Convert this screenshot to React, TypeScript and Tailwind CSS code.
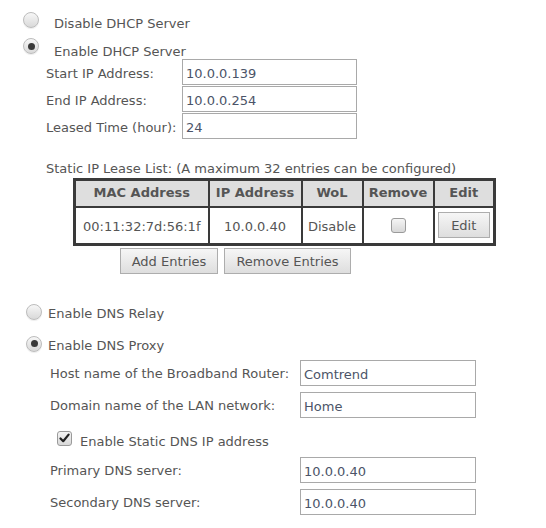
import React from "react";

function Radio({ checked }: { checked?: boolean }) {
  return (
    <span className="flex h-[16px] w-[16px] shrink-0 items-center justify-center rounded-full border border-[#bcbcbc] bg-linear-to-b from-[#f7f7f7] to-[#d9d9d9] shadow-[0_1px_1px_rgba(0,0,0,0.08)]">
      {checked && <span className="h-[7px] w-[7px] rounded-full bg-[#3a3a3a]" />}
    </span>
  );
}

function Field({ value, className = "" }: { value: string; className?: string }) {
  return (
    <div className={`flex h-[26px] items-center border border-[#a9a9a9] bg-white pl-[3px] pt-[3px] text-[#4b5468] ${className}`}>
      {value}
    </div>
  );
}

function Btn({ label, className = "" }: { label: string; className?: string }) {
  return (
    <div className={`flex h-[26px] items-center justify-center border border-[#adadad] bg-linear-to-b from-[#f6f6f6] to-[#dedede] pt-[2px] text-[#555] ${className}`}>
      {label}
    </div>
  );
}

export default function App() {
  const dhcpRows = [
    ["Start IP Address:", "10.0.0.139"],
    ["End IP Address:", "10.0.0.254"],
    ["Leased Time (hour):", "24"],
  ];

  return (
    <div className="h-[528px] w-[546px] bg-white text-[13px] leading-[18px] text-[#555]" style={{ fontFamily: '"DejaVu Sans", Verdana, sans-serif' }}>
      {/* DHCP */}
      <div className="pt-[12px]">
        <div className="flex h-[20px] items-center pl-[23px]">
          <span className="-mt-[5px]"><Radio /></span>
          <span className="ml-[15px] pt-[4px]">Disable DHCP Server</span>
        </div>
        <div className="mt-[8px] flex h-[19px] items-center pl-[23px]">
          <span className="-mt-[7px]"><Radio checked /></span>
          <span className="ml-[15px] pt-[4px]">Enable DHCP Server</span>
        </div>

        <div className="pl-[46px]">
          {dhcpRows.map(([label, value]) => (
            <div key={label} className="flex h-[27px] items-start">
              <span className="flex h-[26px] w-[136px] items-center whitespace-nowrap pt-[3px]">{label}</span>
              <Field value={value} className="w-[175px]" />
            </div>
          ))}
        </div>

        <div className="mt-[18px] whitespace-nowrap pl-[46px] pt-[2px]">Static IP Lease List: (A maximum 32 entries can be configured)</div>

        <table className="ml-[73px] w-[420px] table-fixed border-collapse border-[3px] border-[#3a3a3a]">
          <colgroup>
            <col className="w-[134px]" />
            <col className="w-[93px]" />
            <col className="w-[61px]" />
            <col className="w-[71px]" />
            <col className="w-[61px]" />
          </colgroup>
          <thead>
            <tr className="h-[27px] bg-[#dedede]">
              {["MAC Address", "IP Address", "WoL", "Remove", "Edit"].map((h) => (
                <th key={h} className="whitespace-nowrap border-2 border-[#3a3a3a] p-0 text-center font-bold text-[#555]">
                  {h}
                </th>
              ))}
            </tr>
          </thead>
          <tbody>
            <tr className="h-[38px]">
              <td className="whitespace-nowrap border-2 border-[#3a3a3a] p-0 pt-[3px] text-center">00:11:32:7d:56:1f</td>
              <td className="border-2 border-[#3a3a3a] p-0 pt-[3px] text-center">10.0.0.40</td>
              <td className="border-2 border-[#3a3a3a] p-0 pt-[3px] text-center">Disable</td>
              <td className="border-2 border-[#3a3a3a] p-0">
                <div className="flex justify-center">
                  <span className="h-[15px] w-[15px] rounded-[3px] border border-[#9a9a9a] bg-linear-to-b from-[#f5f5f5] to-[#d8d8d8]" />
                </div>
              </td>
              <td className="border-2 border-[#3a3a3a] p-0">
                <div className="flex justify-center">
                  <Btn label="Edit" className="w-[52px]" />
                </div>
              </td>
            </tr>
          </tbody>
        </table>

        <div className="mt-[2px] flex gap-[6px] pl-[120px]">
          <Btn label="Add Entries" className="w-[98px]" />
          <Btn label="Remove Entries" className="w-[127px]" />
        </div>
      </div>

      {/* DNS */}
      <div className="mt-[29px]">
        <div className="flex h-[20px] items-center pl-[26px]">
          <span className="-mt-[3px]"><Radio /></span>
          <span className="ml-[6px] pt-[2px]">Enable DNS Relay</span>
        </div>
        <div className="mt-[12px] flex h-[20px] items-center pl-[26px]">
          <span className="-mt-[3px]"><Radio checked /></span>
          <span className="ml-[6px] pt-[2px]">Enable DNS Proxy</span>
        </div>

        <div className="mt-[5px] flex flex-col gap-[6px] pl-[50px]">
          <div className="flex h-[26px] items-center">
            <span className="w-[250px] whitespace-nowrap pt-[2px]">Host name of the Broadband Router:</span>
            <Field value="Comtrend" className="w-[176px]" />
          </div>
          <div className="flex h-[26px] items-center">
            <span className="w-[250px] pt-[2px]">Domain name of the LAN network:</span>
            <Field value="Home" className="w-[176px]" />
          </div>
        </div>

        <div className="mt-[10px] flex h-[26px] items-center pl-[57px]">
          <span className="-mt-[6px] flex h-[15px] w-[15px] items-center justify-center rounded-[3px] border border-[#9a9a9a] bg-linear-to-b from-[#f5f5f5] to-[#d8d8d8]">
            <svg width="11" height="10" viewBox="0 0 11 10">
              <path d="M1.5 5.5 L4.2 8.2 L9.6 1.6" fill="none" stroke="#222" strokeWidth="2.2" strokeLinecap="round" strokeLinejoin="round" />
            </svg>
          </span>
          <span className="ml-[8px] pt-[2px]">Enable Static DNS IP address</span>
        </div>

        <div className="mt-[3px] flex flex-col gap-[6px] pl-[50px]">
          <div className="flex h-[26px] items-center">
            <span className="w-[250px] pt-[2px]">Primary DNS server:</span>
            <Field value="10.0.0.40" className="w-[176px]" />
          </div>
          <div className="flex h-[26px] items-center">
            <span className="w-[250px] pt-[2px]">Secondary DNS server:</span>
            <Field value="10.0.0.40" className="w-[176px]" />
          </div>
        </div>
      </div>
    </div>
  );
}
